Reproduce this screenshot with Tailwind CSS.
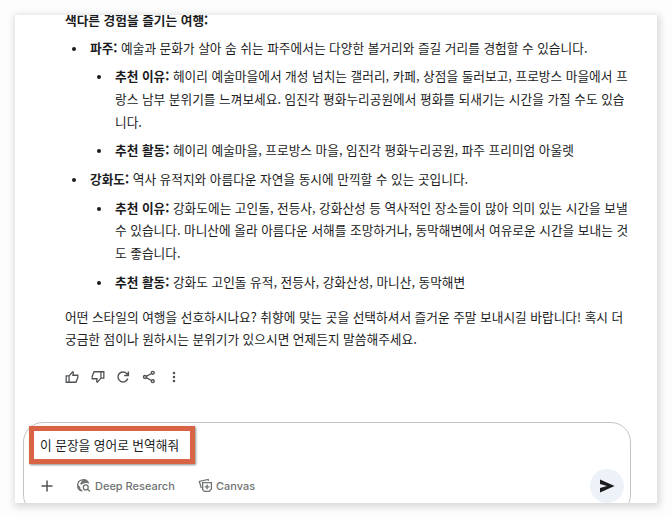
<!DOCTYPE html>
<html lang="ko">
<head>
<meta charset="utf-8">
<title>Chat</title>
<script src="https://cdn.jsdelivr.net/npm/@tailwindcss/browser@4"></script>
</head>
<body class="w-[672px] h-[518px] overflow-hidden bg-[#fdfdfd] pt-[15px] pl-[15px]">
<main class="w-[642px] h-[488px] overflow-hidden bg-white shadow-[1px_2px_7px_2px_rgba(0,0,0,0.14)] flex flex-col font-['Noto_Sans_CJK_KR','Noto_Sans',sans-serif] text-[12.7px] leading-[22.6px] text-[#1b1c1d] whitespace-nowrap">
  <article class="shrink-0 h-[352px] pl-[50px] -mt-[6px]">
    <p class="font-bold">색다른 경험을 즐기는 여행:</p>
    <ul class="pt-[5.2px] pl-[25px] flex flex-col gap-[6.1px]">
      <li class="relative before:content-[''] before:absolute before:-left-[18px] before:top-[10px] before:size-1 before:rounded-full before:bg-[#1b1c1d]"><b>파주:</b> 예술과 문화가 살아 숨 쉬는 파주에서는 다양한 볼거리와 즐길 거리를 경험할 수 있습니다.
        <ul class="pt-[6.1px] pl-[25px] flex flex-col gap-[6.1px]">
          <li class="relative before:content-[''] before:absolute before:-left-[18px] before:top-[10px] before:size-1 before:rounded-full before:bg-[#1b1c1d]"><b>추천 이유:</b> 헤이리 예술마을에서 개성 넘치는 갤러리, 카페, 상점을 둘러보고, 프로방스 마을에서 프<br>랑스 남부 분위기를 느껴보세요. 임진각 평화누리공원에서 평화를 되새기는 시간을 가질 수도 있습<br>니다.</li>
          <li class="relative before:content-[''] before:absolute before:-left-[18px] before:top-[10px] before:size-1 before:rounded-full before:bg-[#1b1c1d]"><b>추천 활동:</b> 헤이리 예술마을, 프로방스 마을, 임진각 평화누리공원, 파주 프리미엄 아울렛</li>
        </ul>
      </li>
      <li class="relative before:content-[''] before:absolute before:-left-[18px] before:top-[10px] before:size-1 before:rounded-full before:bg-[#1b1c1d]"><b>강화도:</b> 역사 유적지와 아름다운 자연을 동시에 만끽할 수 있는 곳입니다.
        <ul class="pt-[6.1px] pl-[25px] flex flex-col gap-[6.1px]">
          <li class="relative before:content-[''] before:absolute before:-left-[18px] before:top-[10px] before:size-1 before:rounded-full before:bg-[#1b1c1d]"><b>추천 이유:</b> 강화도에는 고인돌, 전등사, 강화산성 등 역사적인 장소들이 많아 의미 있는 시간을 보낼<br>수 있습니다. 마니산에 올라 아름다운 서해를 조망하거나, 동막해변에서 여유로운 시간을 보내는 것<br>도 좋습니다.</li>
          <li class="relative before:content-[''] before:absolute before:-left-[18px] before:top-[10px] before:size-1 before:rounded-full before:bg-[#1b1c1d]"><b>추천 활동:</b> 강화도 고인돌 유적, 전등사, 강화산성, 마니산, 동막해변</li>
        </ul>
      </li>
    </ul>
    <p class="pt-[12.4px]">어떤 스타일의 여행을 선호하시나요? 취향에 맞는 곳을 선택하셔서 즐거운 주말 보내시길 바랍니다! 혹시 더<br>궁금한 점이나 원하시는 분위기가 있으시면 언제든지 말씀해주세요.</p>
  </article>
  <div class="shrink-0 h-[32px] pl-[50px] flex items-center gap-[11.5px] text-[#505355]">
    <svg class="size-[14px]" viewBox="0 0 24 24" fill="none" stroke="currentColor" stroke-width="2.2"><path d="M2 10h5v11H2zM7 10l6-7 1.4 1L13.5 9H22v4l-3.2 8H7z"/></svg>
    <svg class="size-[14px] rotate-180" viewBox="0 0 24 24" fill="none" stroke="currentColor" stroke-width="2.2"><path d="M2 10h5v11H2zM7 10l6-7 1.4 1L13.5 9H22v4l-3.2 8H7z"/></svg>
    <svg class="size-[14px]" viewBox="0 0 24 24" fill="none" stroke="currentColor" stroke-width="2.5"><path d="M20.2 14.5A8.6 8.6 0 1 1 18.5 6.2L21 9M21.2 2.5V9.5H14"/></svg>
    <svg class="size-[14px]" viewBox="0 0 24 24" fill="none" stroke="currentColor" stroke-width="2.4"><circle cx="18.5" cy="4.8" r="2.5"/><circle cx="5" cy="12" r="2.5"/><circle cx="18.5" cy="19.2" r="2.5"/><path d="M7.3 10.8l9-4.8M7.3 13.2l9 4.8"/></svg>
    <svg class="size-[14px]" viewBox="0 0 24 24" fill="currentColor"><circle cx="12" cy="5" r="2.2"/><circle cx="12" cy="12" r="2.2"/><circle cx="12" cy="19" r="2.2"/></svg>
  </div>
  <section class="relative shrink-0 mt-[29px] ml-[8px] w-[608px] h-[93px] border border-[#c4c4c4] rounded-[20px] pl-[16px]">
    <div class="absolute left-[5px] top-[3px] w-[166px] h-[38px] border-[5px] border-[#d96445] shadow-[1px_1px_2px_rgba(0,0,0,0.45)]"></div>
    <p class="pt-[11px]">이 문장을 영어로 번역해줘</p>
    <div class="mt-[12.4px] h-[34px] flex items-center text-[#707373] font-[Inter,sans-serif] text-[11px] font-medium">
      <svg class="w-[14px] h-[14px] text-[#505355]" viewBox="0 0 14 14" fill="none" stroke="currentColor" stroke-width="1.5"><path d="M7 1.5v11M1.5 7h11"/></svg>
      <svg class="ml-[22px] size-[15px]" viewBox="0 0 16 16" fill="none" stroke="currentColor" stroke-width="1.4"><path d="M6.8 13.8A6 6 0 1 1 13.4 5.8"/><path d="M1.5 7l3 2.5v1.8l1.5 1.2-.3 1.6L2 11zM7 2l4 .3 2 3-3.2.1L7.5 6.2 5.5 7.3 4.3 6z" fill="currentColor" stroke="none"/><circle cx="10.4" cy="10" r="2.6"/><path d="M12.3 11.9l2.5 2.5"/></svg>
      <span class="ml-[4px] w-[103px] pt-px">Deep Research</span>
      <svg class="size-[15px]" viewBox="0 0 16 16" fill="none" stroke="currentColor" stroke-width="1.4"><path d="M5 5h9.3v6.6l-2.5 2.7H6.9L5 12.6zM9.7 7v5M7.2 9.5h5M3.6 10.8L1.4 3.6 10.8 1.5l.5 1.4"/></svg>
      <span class="ml-[3px] pt-px">Canvas</span>
      <span class="ml-auto mr-[6px] size-[34px] rounded-full bg-[#edf2f9] flex items-center justify-center">
        <svg class="size-4" viewBox="0 0 16 16" fill="#1b1c1d"><path d="M1 1.6L15.6 8 1 14.4V10L8 8 1 6z"/></svg>
      </span>
    </div>
  </section>
</main>
</body>
</html>
